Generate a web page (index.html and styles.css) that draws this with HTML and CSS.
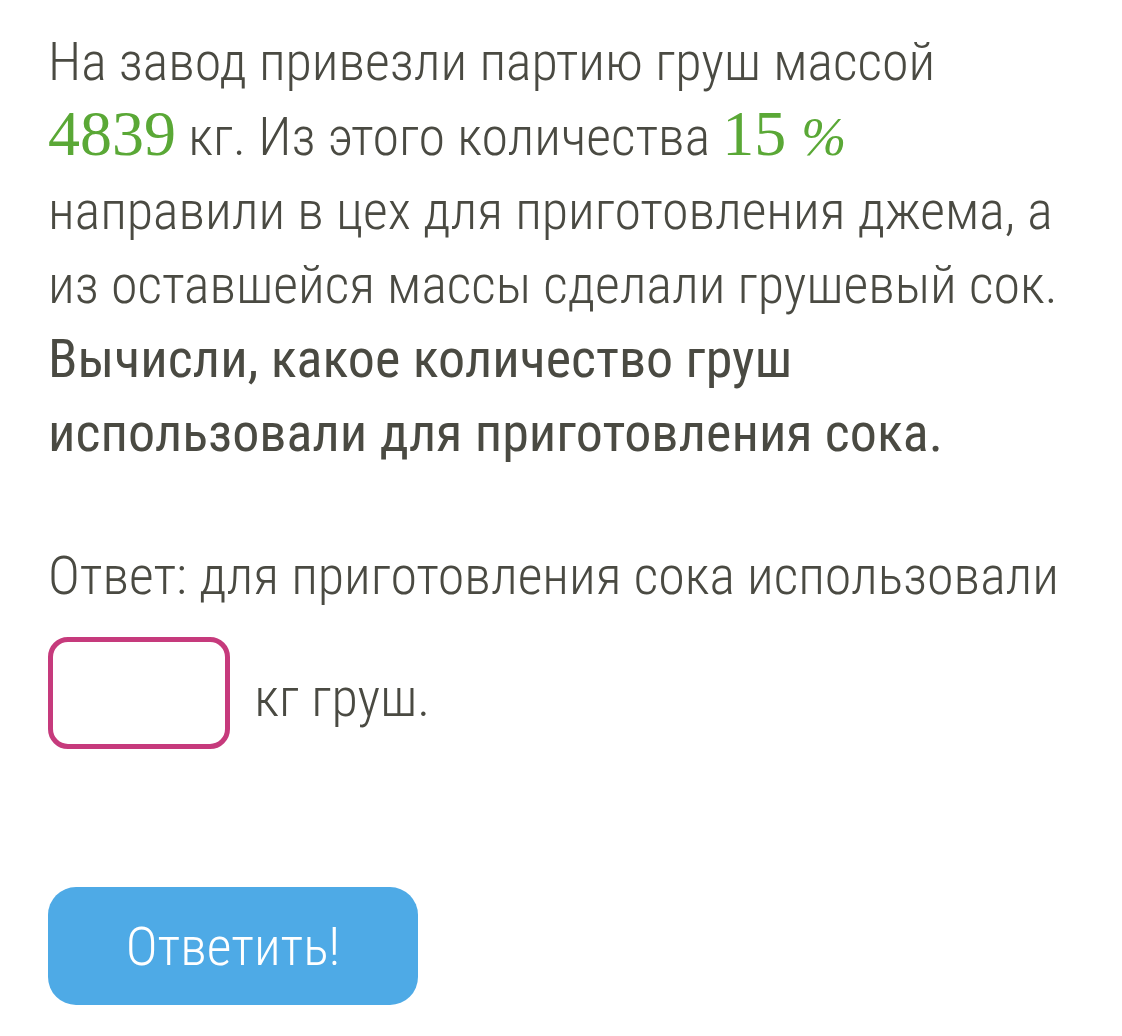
FILE: index.html
```html
<!DOCTYPE html>
<html lang="ru">
<head>
<meta charset="utf-8">
<link rel="stylesheet" href="styles.css">
</head>
<body>
<div class="task">
  <p class="text">На завод привезли партию груш массой <span class="num">4839</span> кг. Из этого количества <span class="num">15<span class="pct">%</span></span> направили в цех для приготовления джема, а из оставшейся массы сделали грушевый сок. <b class="strong">Вычисли, какое количество груш использовали для приготовления сока.</b></p>
  <p class="answer">Ответ: для приготовления сока использовали <span class="field"></span> кг груш.</p>
  <button class="submit" type="button">Ответить!</button>
</div>
</body>
</html>
```

FILE: styles.css
```css
html, body {
  margin: 0;
  padding: 0;
  background: #ffffff;
}
.task {
  padding: 25px 62px 0 48px;
  font-family: "Roboto", "Liberation Sans", sans-serif;
  font-stretch: 75%;
  font-weight: 300;
  font-size: 54px;
  line-height: 74px;
  color: #4a4a42;
}
.text {
  margin: 0;
}
.num {
  font-family: "Liberation Serif", serif;
  font-stretch: 100%;
  font-weight: 400;
  font-size: 64px;
  line-height: 70px;
  color: #5aa836;
}
.pct {
  margin-left: 15px;
  font-style: italic;
  font-size: 54px;
}
.strong {
  font-weight: 400;
}
.answer {
  margin: 69px 0 0;
}
.field {
  display: inline-block;
  box-sizing: border-box;
  width: 182px;
  height: 112px;
  border: 5px solid #c63a7c;
  border-radius: 20px;
  vertical-align: -45px;
  margin: 24px 12px 12px 0;
}
.submit {
  display: block;
  margin-top: 126px;
  width: 370px;
  height: 118px;
  border: none;
  border-radius: 28px;
  background: #4eaae6;
  color: #ffffff;
  font-family: "Roboto", "Liberation Sans", sans-serif;
  font-stretch: 75%;
  font-weight: 300;
  font-size: 54px;
}
```
